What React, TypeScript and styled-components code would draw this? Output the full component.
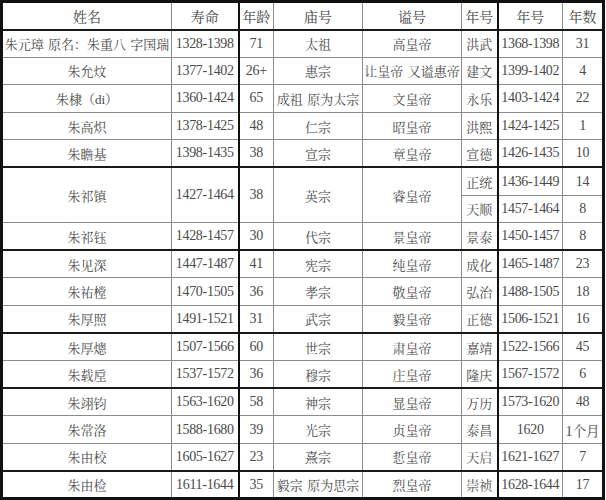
import React from 'react';
import styled, {createGlobalStyle} from 'styled-components';

const GlobalStyle = createGlobalStyle`
  html, body {
    margin: 0;
    padding: 0;
    background: #fff;
  }
`;

interface Reign {
  era: string
  years: string
  count: string
}

interface Emperor {
  name: string
  life: string
  age: string
  temple: string
  posthumous: string
  reigns: Reign[]
  heavy?: boolean
}

// three-per-em space between phrases, a bit wider than a plain space
const sp = '\u2004';

const emperors: Emperor[] = [
  {name: `朱元璋${sp}原名：朱重八${sp}字国瑞`, life: '1328-1398', age: '71', temple: '太祖', posthumous: '高皇帝', reigns: [{era: '洪武', years: '1368-1398', count: '31'}]},
  {name: '朱允炆', life: '1377-1402', age: '26+', temple: '惠宗', posthumous: `让皇帝${sp}又谥惠帝`, reigns: [{era: '建文', years: '1399-1402', count: '4'}]},
  {name: '朱棣（di）', life: '1360-1424', age: '65', temple: `成祖${sp}原为太宗`, posthumous: '文皇帝', reigns: [{era: '永乐', years: '1403-1424', count: '22'}]},
  {name: '朱高炽', life: '1378-1425', age: '48', temple: '仁宗', posthumous: '昭皇帝', reigns: [{era: '洪熙', years: '1424-1425', count: '1'}]},
  {name: '朱瞻基', life: '1398-1435', age: '38', temple: '宣宗', posthumous: '章皇帝', reigns: [{era: '宣德', years: '1426-1435', count: '10'}]},
  {
    name: '朱祁镇', life: '1427-1464', age: '38', temple: '英宗', posthumous: '睿皇帝', heavy: true,
    reigns: [{era: '正统', years: '1436-1449', count: '14'}, {era: '天顺', years: '1457-1464', count: '8'}]
  },
  {name: '朱祁钰', life: '1428-1457', age: '30', temple: '代宗', posthumous: '景皇帝', reigns: [{era: '景泰', years: '1450-1457', count: '8'}]},
  {name: '朱见深', life: '1447-1487', age: '41', temple: '宪宗', posthumous: '纯皇帝', heavy: true, reigns: [{era: '成化', years: '1465-1487', count: '23'}]},
  {name: '朱祐樘', life: '1470-1505', age: '36', temple: '孝宗', posthumous: '敬皇帝', reigns: [{era: '弘治', years: '1488-1505', count: '18'}]},
  {name: '朱厚照', life: '1491-1521', age: '31', temple: '武宗', posthumous: '毅皇帝', reigns: [{era: '正德', years: '1506-1521', count: '16'}]},
  {name: '朱厚熜', life: '1507-1566', age: '60', temple: '世宗', posthumous: '肃皇帝', heavy: true, reigns: [{era: '嘉靖', years: '1522-1566', count: '45'}]},
  {name: '朱载垕', life: '1537-1572', age: '36', temple: '穆宗', posthumous: '庄皇帝', reigns: [{era: '隆庆', years: '1567-1572', count: '6'}]},
  {name: '朱翊钧', life: '1563-1620', age: '58', temple: '神宗', posthumous: '显皇帝', heavy: true, reigns: [{era: '万历', years: '1573-1620', count: '48'}]},
  {name: '朱常洛', life: '1588-1680', age: '39', temple: '光宗', posthumous: '贞皇帝', reigns: [{era: '泰昌', years: '1620', count: '1个月'}]},
  {name: '朱由校', life: '1605-1627', age: '23', temple: '熹宗', posthumous: '悊皇帝', reigns: [{era: '天启', years: '1621-1627', count: '7'}]},
  {name: '朱由检', life: '1611-1644', age: '35', temple: `毅宗${sp}原为思宗`, posthumous: '烈皇帝', heavy: true, reigns: [{era: '崇祯', years: '1628-1644', count: '17'}]},
];

const widths = [170, 67, 35, 89, 99, 36, 65, 41];

const Sheet = styled.table`
  width: 603px;
  border-collapse: collapse;
  table-layout: fixed;
  border: 3px solid #111;
  font-family: "Liberation Serif", "Noto Serif CJK SC", "Noto Sans CJK SC", serif;
  font-size: 13px;
  color: #4a4a4a;
`;

const Row = styled.tr<{ $heavy?: boolean }>`
  height: 27.6px;
  & > td {
    border-top: ${p => p.$heavy ? '2px solid #1a1a1a' : '1px solid #8c8c8c'};
  }
`;

const HeadRow = styled.tr`
  height: 28px;
`;

interface CellProps {
  $strong?: boolean
}

const Cell = styled.td<CellProps>`
  padding: 0;
  text-align: center;
  vertical-align: middle;
  white-space: nowrap;
  overflow: hidden;
  border-left: 1px solid #8c8c8c;
  border-right: ${p => p.$strong ? '2px solid #111' : '1px solid #8c8c8c'};
  border-bottom: 1px solid #8c8c8c;
`;

const HeadCell = styled.th<CellProps>`
  padding: 0;
  font-weight: normal;
  font-size: 14px;
  text-align: center;
  vertical-align: middle;
  color: #444;
  border-left: 1px solid #8c8c8c;
  border-right: ${p => p.$strong ? '2px solid #111' : '1px solid #8c8c8c'};
  border-bottom: 2px solid #1a1a1a;
`;

const Num = styled.span`
  font-size: 14px;
  letter-spacing: -0.3px;
`;

const headers = ['姓名', '寿命', '年龄', '庙号', '谥号', '年号', '年号', '年数'];

export default function App() {
  return (
    <>
      <GlobalStyle/>
      <Sheet>
        <colgroup>
          {widths.map((w, i) => <col key={i} style={{width: w}}/>)}
        </colgroup>
        <thead>
          <HeadRow>
            {headers.map((h, i) => (
              <HeadCell key={i} $strong={i === 1 || i === 5}>{h}</HeadCell>
            ))}
          </HeadRow>
        </thead>
        <tbody>
          {emperors.map(e => {
            const span = e.reigns.length;
            return e.reigns.map((r, j) => (
              <Row key={e.name + j} $heavy={j === 0 && e.heavy}>
                {j === 0 && (
                  <>
                    <Cell rowSpan={span}>{e.name}</Cell>
                    <Cell rowSpan={span} $strong><Num>{e.life}</Num></Cell>
                    <Cell rowSpan={span}><Num>{e.age}</Num></Cell>
                    <Cell rowSpan={span}>{e.temple}</Cell>
                    <Cell rowSpan={span}>{e.posthumous}</Cell>
                  </>
                )}
                <Cell $strong>{r.era}</Cell>
                <Cell><Num>{r.years}</Num></Cell>
                <Cell><Num>{r.count}</Num></Cell>
              </Row>
            ));
          })}
        </tbody>
      </Sheet>
    </>
  );
}
